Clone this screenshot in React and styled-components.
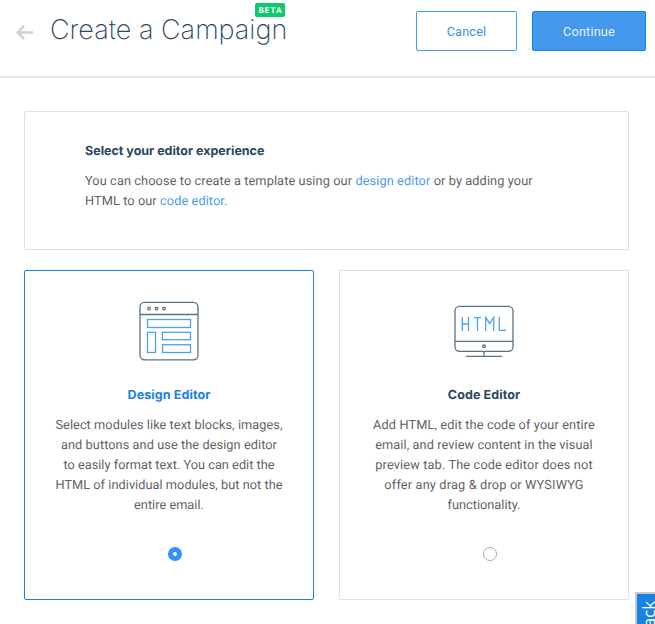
import React from "react";
import styled, { createGlobalStyle } from "styled-components";

const GlobalStyle = createGlobalStyle`
  * { box-sizing: border-box; }
  html, body { margin: 0; padding: 0; background: #fff; overflow: hidden; }
  body { font-family: Roboto, "Open Sans", sans-serif; font-size: 12.75px; line-height: 20px; color: #626266; text-rendering: geometricPrecision; }
  h1, h2, p { margin: 0; }
  button { font: inherit; }
`;

const Page = styled.div`
  width: 655px;
  height: 624px;
  overflow: hidden;
`;

const Header = styled.header`
  display: flex;
  align-items: flex-start;
  height: 78px;
  padding: 11px 9px 0 16px;
  border-bottom: 2px solid #e3e4e4;
`;

const BackIcon = styled.svg`
  width: 18px;
  height: 16px;
  margin-top: 13px;
  flex: none;
`;

const TitleWrap = styled.div`
  position: relative;
  width: 237px;
  margin-left: 16px;
  margin-right: auto;
`;

const Title = styled.h1`
  font-family: Inter, Roboto, sans-serif;
  font-size: 27px;
  font-weight: 200;
  line-height: 38px;
  white-space: nowrap;
  color: #294661;
`;

const Badge = styled.span`
  position: absolute;
  top: -8px;
  right: 2px;
  width: 30px;
  height: 14px;
  border-radius: 2px;
  background: #0acb6b;
  color: #fff;
  font: 700 8px/14px Inter, sans-serif;
  letter-spacing: 0.8px;
  text-align: center;
  text-indent: 1px;
`;

const Button = styled.button`
  width: ${(p) => p.$width}px;
  height: 40px;
  padding: 2px 0 0;
  margin-left: 15px;
  border: 1px solid ${(p) => (p.$primary ? "#1082e5" : "#4499e9")};
  border-radius: 2px;
  background: ${(p) => (p.$primary ? "#4499ec" : "#fff")};
  color: ${(p) => (p.$primary ? "#e6f2fd" : "#3991e6")};
  letter-spacing: 0.15px;
`;

const Main = styled.main`
  padding: 33px 26px 0 24px;
`;

const Intro = styled.section`
  height: 139px;
  padding: 30px 60px 0;
  border: 1px solid #e0e1e3;
  border-radius: 2px;
`;

const Heading = styled.h2`
  font: 650 12.5px/20px Inter, Roboto, sans-serif;
  letter-spacing: ${(p) => p.$spacing || 0}px;
  color: ${(p) => (p.$selected ? "#1a82e2" : "#294661")};
  margin-bottom: 10px;
`;

const Line = styled.span`
  display: block;
  white-space: nowrap;
  letter-spacing: ${(p) => p.$spacing}px;
`;

const Link = styled.a`
  color: #4a9cea;
`;

const Cards = styled.div`
  display: grid;
  grid-template-columns: 290px 290px;
  gap: 25px;
  margin-top: 20px;
`;

const Card = styled.section`
  display: flex;
  flex-direction: column;
  align-items: center;
  height: 330px;
  padding-top: 29px;
  border: 1px solid ${(p) => (p.$selected ? "#1a82e2" : "#e0e1e3")};
  border-radius: 2px;
  text-align: center;
`;

const CardIcon = styled.svg`
  width: 62px;
  height: 62px;
  flex: none;
  margin-bottom: 24px;
  fill: none;
  stroke: #5a7286;
  stroke-width: 1.3;
`;

const Radio = styled.span`
  width: 14px;
  height: 14px;
  margin: 31px 0 0 12px;
  border-radius: 50%;
  background: #fff;
  border: ${(p) => (p.$selected ? "5px solid #3093fb" : "1px solid #aaa")};
`;

const Feedback = styled.aside`
  position: fixed;
  left: 635px;
  top: 592px;
  width: 40px;
  height: 110px;
  padding: 7px 0 0 2px;
  border: 2px solid #c9c9c9;
  background: #1a82e2;
  color: #fff;
  font: 500 17px/20px "Open Sans", sans-serif;
  writing-mode: vertical-lr;
`;

const FeedbackText = styled.span`
  display: block;
  transform: rotate(180deg);
  text-align: right;
`;

export default function App() {
  return (
    <Page>
      <GlobalStyle />
      <Header>
        <BackIcon viewBox="0 0 18 16" fill="none" stroke="#d0d0d0" strokeWidth="2.6">
          <path d="M17 8.5H2M8 1.7L1.8 8.5L8 15" />
        </BackIcon>
        <TitleWrap>
          <Title>Create a Campaign</Title>
          <Badge>BETA</Badge>
        </TitleWrap>
        <Button $width={101}>Cancel</Button>
        <Button $width={114} $primary>Continue</Button>
      </Header>
      <Main>
        <Intro>
          <Heading>Select your editor experience</Heading>
          <p>
            <Line $spacing={0.1}>You can choose to create a template using our <Link>design editor</Link> or by adding your</Line>
            <Line $spacing={0.09}>HTML to our <Link>code editor.</Link></Line>
          </p>
        </Intro>
        <Cards>
          <Card $selected>
            <CardIcon viewBox="138 300 62 62">
              <rect x="140" y="302.3" width="58" height="57.5" rx="4.5" />
              <path d="M140 314.5H198" />
              <circle cx="149" cy="308.5" r="1.3" />
              <circle cx="156.5" cy="308.5" r="1.3" />
              <circle cx="164" cy="308.5" r="1.3" />
              <g stroke="#4ea2f0">
                <rect x="147.5" y="319.5" width="43" height="8" />
                <rect x="147.5" y="332.3" width="8" height="20.2" />
                <rect x="162.5" y="332.3" width="28" height="7.4" />
                <rect x="162.5" y="344.7" width="28" height="7.8" />
              </g>
            </CardIcon>
            <Heading $selected $spacing={0.1}>Design Editor</Heading>
            <p>
              <Line $spacing={0.06}>Select modules like text blocks, images,</Line>
              <Line $spacing={0.07}>and buttons and use the design editor</Line>
              <Line $spacing={0.02}>to easily format text. You can edit the</Line>
              <Line $spacing={0.04}>HTML of individual modules, but not the</Line>
              <Line $spacing={0.02}>entire email.</Line>
            </p>
            <Radio $selected />
          </Card>
          <Card>
            <CardIcon viewBox="453 300 62 62">
              <rect x="455" y="306.3" width="58" height="45" rx="4.5" />
              <path d="M455 341.3H513M484 351.5V356.3M466 356.3H502" />
              <circle cx="484" cy="346.3" r="1.3" />
              <path stroke="#4ea2f0" d="M462.3 317V331M468.5 317V331M462.3 324H468.5M474 317.6H481M477.5 317.6V331M485.7 331V317.5L489.7 323.5L493.7 317.5V331M499.3 317V330.3H506" />
            </CardIcon>
            <Heading $spacing={0.1}>Code Editor</Heading>
            <p>
              <Line $spacing={0.12}>Add HTML, edit the code of your entire</Line>
              <Line $spacing={0.08}>email, and review content in the visual</Line>
              <Line $spacing={0.14}>preview tab. The code editor does not</Line>
              <Line $spacing={0.16}>offer any drag &amp; drop or WYSIWYG</Line>
              <Line $spacing={0}>functionality.</Line>
            </p>
            <Radio />
          </Card>
        </Cards>
      </Main>
      <Feedback><FeedbackText>Feedback</FeedbackText></Feedback>
    </Page>
  );
}
